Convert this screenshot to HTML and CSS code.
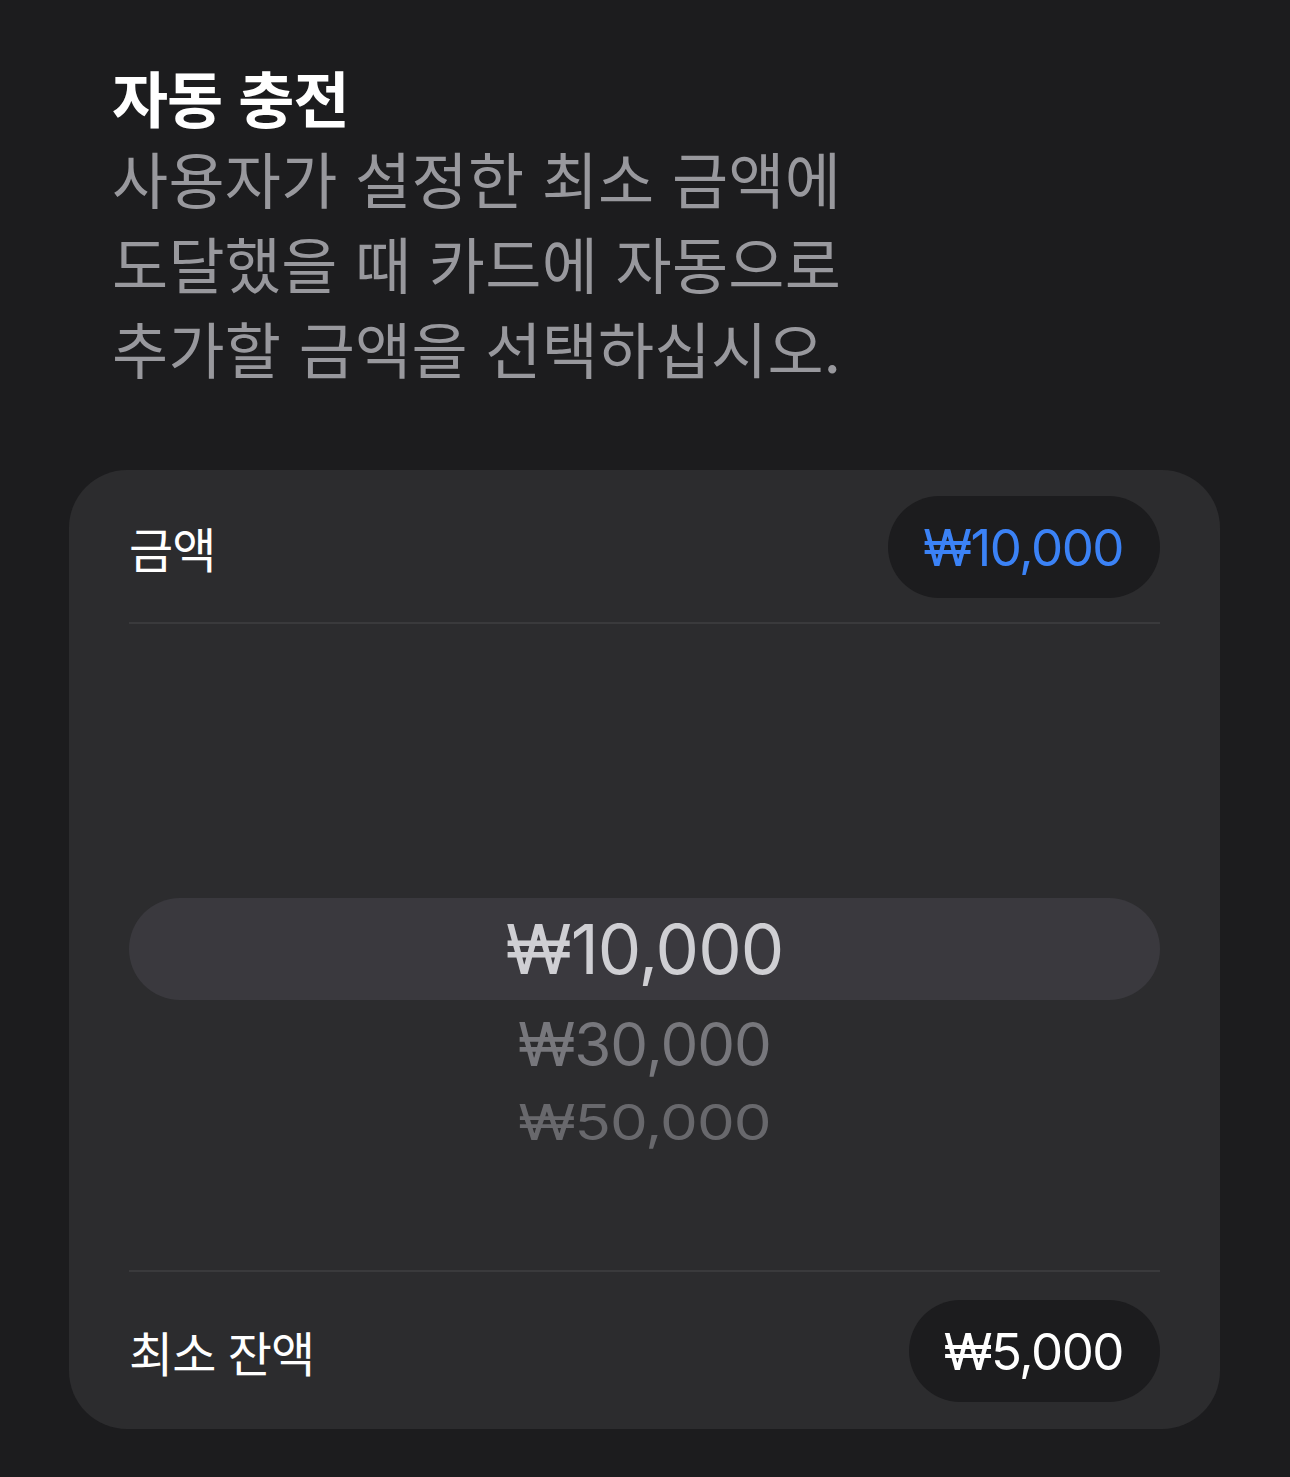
FILE: index.html
```html
<!DOCTYPE html>
<html lang="ko">
<head>
  <meta charset="utf-8">
  <title>자동 충전</title>
  <link rel="stylesheet" href="styles.css">
</head>
<body>
  <main class="page">
    <header class="intro">
      <h1 class="title">자동 충전</h1>
      <p class="subtitle">사용자가 설정한 최소 금액에<br>도달했을 때 카드에 자동으로<br>추가할 금액을 선택하십시오.</p>
    </header>

    <section class="card">
      <div class="row row-top">
        <span class="row-label">금액</span>
        <span class="pill pill-blue">₩10,000</span>
      </div>
      <div class="divider"></div>

      <!-- amount wheel -->
      <div class="picker">
        <div class="picker-selected">₩10,000</div>
        <div class="picker-item picker-item-near">₩30,000</div>
        <div class="picker-item picker-item-far">₩50,000</div>
      </div>

      <div class="divider"></div>
      <div class="row row-bottom">
        <span class="row-label">최소 잔액</span>
        <span class="pill">₩5,000</span>
      </div>
    </section>
  </main>
</body>
</html>
```

FILE: styles.css
```css
/* auto top-up screen, dark theme */
html, body {
  margin: 0;
  padding: 0;
  background-color: #1c1c1e;
}
body {
  font-family: Inter, "Noto Sans CJK KR", sans-serif;
  color: #fff;
}
.page {
  padding: 59px 70px 48px 69px;
}
.intro {
  padding-left: 43px;
}
.title {
  margin: 0;
  font-family: "Noto Sans CJK KR", sans-serif;
  font-size: 61px;
  font-weight: 700;
  line-height: 76px;
  letter-spacing: -1px;
  color: #fff;
}
.subtitle {
  margin: 0;
  font-family: "Noto Sans CJK KR", sans-serif;
  font-size: 61px;
  font-weight: 400;
  line-height: 85px;
  letter-spacing: 0.3px;
  color: #98989d;
}
.card {
  margin-top: 80px;
  background-color: #2c2c2e;
  border-radius: 58px;
  padding: 0 60px 0 60px;
}
.row {
  display: flex;
  align-items: center;
  justify-content: space-between;
}
.row-top {
  padding: 26px 0 24px 0;
}
.row-bottom {
  padding: 28px 0 27px 0;
}
.row-label {
  font-family: "Noto Sans CJK KR", sans-serif;
  font-size: 48px;
  letter-spacing: -1px;
  color: #fff;
}
.pill {
  display: inline-flex;
  align-items: center;
  height: 102px;
  padding: 0 37px 0 35px;
  border-radius: 51px;
  background-color: #1c1c1e;
  font-size: 51px;
  letter-spacing: -1.5px;
  color: #fff;
}
.pill-blue {
  color: #3b82f6;
}
.divider {
  height: 2px;
  background-color: #3a3a3c;
}
.picker {
  height: 646px;
  padding-top: 274px;
  box-sizing: border-box;
  text-align: center;
}
.picker-selected {
  height: 102px;
  line-height: 102px;
  border-radius: 51px;
  background-color: #3a393e;
  font-size: 69px;
  letter-spacing: -1px;
  color: #cfcfd3;
}
.picker-item {
  color: #77777c;
  letter-spacing: -1px;
}
.picker-item-near {
  margin-top: 12px;
  font-size: 60px;
  line-height: 64px;
}
.picker-item-far {
  margin-top: 16px;
  font-size: 60px;
  line-height: 60px;
  color: #68686c;
  transform: scaleY(0.82);
}
```
